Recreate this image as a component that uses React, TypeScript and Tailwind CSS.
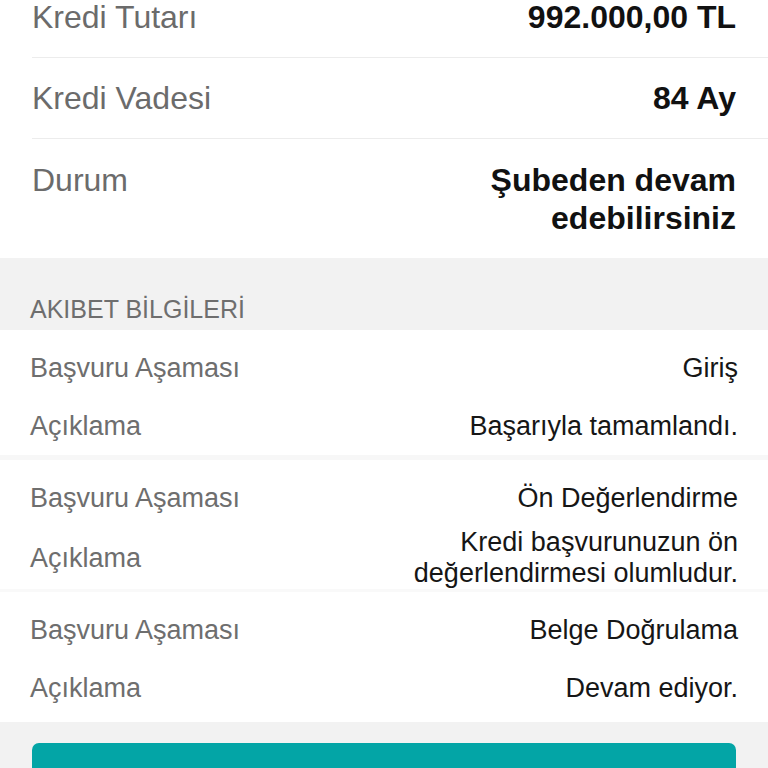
const font = { fontFamily: '"Liberation Sans", Arial, sans-serif' };

interface SummaryRowProps {
  label: string;
  value: React.ReactNode;
  className?: string;
  last?: boolean;
}

function SummaryRow({ label, value, className = "", last }: SummaryRowProps) {
  return (
    <div
      className={`flex items-start justify-between pr-[32px] text-[32px] leading-[38px] ${
        last ? "" : "border-b border-[#ececec]"
      } ${className}`}
    >
      <span className="text-[#6b6b6b]">{label}</span>
      <span className="text-right font-bold text-[#111111]">{value}</span>
    </div>
  );
}

interface StageProps {
  stage: string;
  note: React.ReactNode;
  className?: string;
}

function StageGroup({ stage, note, className = "" }: StageProps) {
  return (
    <div className={`bg-white pt-[9px] pl-[30px] pr-[30px] text-[27px] leading-[31px] ${className}`}>
      <div className="flex min-h-[58px] items-center justify-between">
        <span className="text-[#6e6e6e]">Başvuru Aşaması</span>
        <span className="text-right text-[#161616]">{stage}</span>
      </div>
      <div className="flex min-h-[58px] items-center justify-between">
        <span className="text-[#6e6e6e]">Açıklama</span>
        <span className="text-right text-[#161616]">{note}</span>
      </div>
    </div>
  );
}

export default function App() {
  return (
    <div className="h-[768px] w-[768px] overflow-hidden bg-[#f2f2f2]" style={font}>
      <div className="bg-white pl-[32px]">
        <SummaryRow className="-mt-[2px] pb-[21px]" label="Kredi Tutarı" value="992.000,00 TL" />
        <SummaryRow className="pt-[21px] pb-[21px]" label="Kredi Vadesi" value="84 Ay" />
        <SummaryRow
          className="pt-[22px] pb-[21px]"
          label="Durum"
          last
          value={
            <>
              Şubeden devam
              <br />
              edebilirsiniz
            </>
          }
        />
      </div>

      <div className="flex h-[72px] items-end pb-[6px] pl-[30px] text-[25px] leading-[30px] text-[#6e6e6e]">
        AKIBET BİLGİLERİ
      </div>

      <StageGroup stage="Giriş" note="Başarıyla tamamlandı." />
      <div className="h-[5px] bg-[#f7f7f7]" />
      <StageGroup
        stage="Ön Değerlendirme"
        note={
          <>
            Kredi başvurunuzun ön
            <br />
            değerlendirmesi olumludur.
          </>
        }
      />
      <div className="h-[3px] bg-[#f9f9f9]" />
      <StageGroup className="pb-[5px]" stage="Belge Doğrulama" note="Devam ediyor." />

      <div className="px-[32px] pt-[21px]">
        <div className="h-[60px] rounded-[7px] bg-[#03a5a6]" />
      </div>
    </div>
  );
}
